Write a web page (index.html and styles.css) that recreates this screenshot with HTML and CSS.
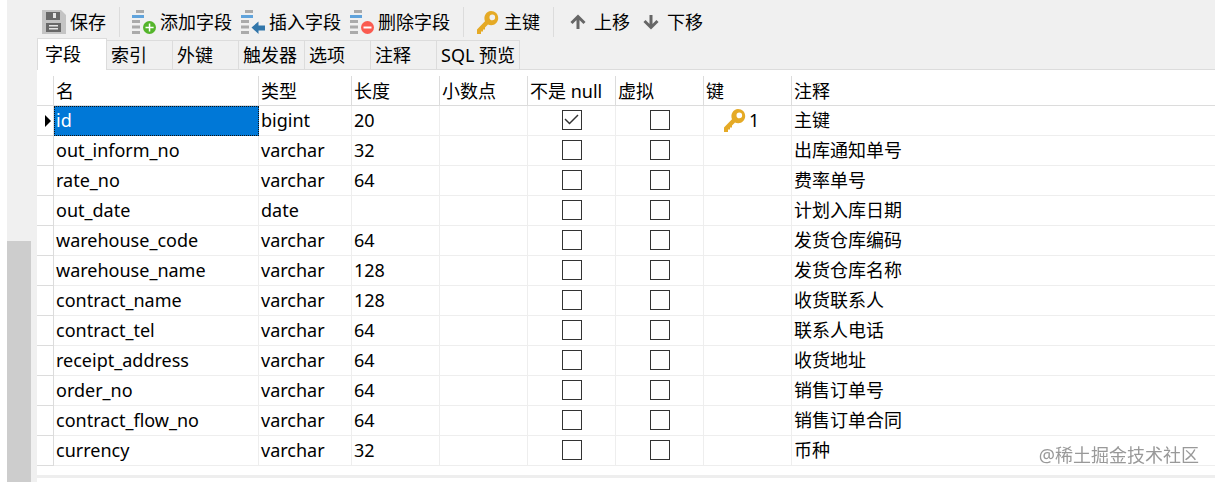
FILE: index.html
```
<!DOCTYPE html>
<html lang="zh-CN">
<head>
  <meta charset="UTF-8" />
  <meta name="viewport" content="width=device-width, initial-scale=1.0" />
  <title>字段</title>
  <link rel="stylesheet" href="styles.css">
</head>
<body>
  <!-- 公用图标 -->
  <svg class="symbols" aria-hidden="true">
    <symbol id="icon-key" viewBox="0 0 24 24">
      <path fill="#e5aa26" fill-rule="evenodd" d="M15 1c4.200 0 7.200 3 7.200 7s-3 7.200-7 7.200c-1.200 0-2.300-.3-3.200-.7l-3 3v2H7v2H5V24H1v-4.500l8-8.300A7.300 7.300 0 0 1 15 1zm1.300 3.600a2.800 2.800 0 1 0 0 5.600 2.800 2.800 0 0 0 0-5.600z" />
    </symbol>
    <symbol id="icon-rows" viewBox="0 0 24 24">
      <path fill="#aaa" d="M4 0h8v3H4zM0 10h8v3H0zM0 15.500h8v3H0zM0 21h8v3H0z" />
      <path fill="#5fa3dc" d="M0 5h12v3H0z" />
    </symbol>
  </svg>

  <div class="app">
    <!-- 左侧滚动条 -->
    <div class="scroll-track">
      <div class="scroll-thumb"></div>
    </div>

    <main class="designer">
      <div class="toolbar">
        <button type="button">
          <svg viewBox="0 0 24 24" aria-hidden="true">
            <path fill="#c4c4c4" d="M0 0h19l5 5v19H0z" />
            <path fill="#686868" d="M4 2h14v8H4zM4 13h15v9H4z" />
            <path fill="#e4e4e4" d="M11 3h3v5h-3zM7 15h9v1.500H7zM7 18h9v1.500H7z" />
          </svg>
          保存
        </button>
        <span class="separator"></span>
        <button type="button">
          <svg viewBox="0 0 24 24" aria-hidden="true">
            <use href="#icon-rows" />
            <circle cx="17.500" cy="17.500" r="6.500" fill="#54b52b" />
            <path fill="#fff" d="M16.800 13.500h1.500v3.300h3.300v1.500h-3.300v3.300h-1.500v-3.300h-3.300v-1.500h3.300z" />
          </svg>
          添加字段
        </button>
        <button type="button">
          <svg viewBox="0 0 24 24" aria-hidden="true">
            <use href="#icon-rows" />
            <path fill="#3276aa" d="M10.500 17.500l7-6v4H24v5h-6.500v3.500z" />
          </svg>
          插入字段
        </button>
        <button type="button">
          <svg viewBox="0 0 24 24" aria-hidden="true">
            <use href="#icon-rows" />
            <circle cx="17.500" cy="17.500" r="6.500" fill="#fa5b50" />
            <path fill="#fff" d="M13.500 16.500h8v2h-8z" />
          </svg>
          删除字段
        </button>
        <span class="separator"></span>
        <button type="button">
          <svg viewBox="0 0 24 24" aria-hidden="true"><use href="#icon-key" /></svg>
          主键
        </button>
        <span class="separator"></span>
        <button type="button">
          <svg viewBox="0 0 24 24" aria-hidden="true">
            <path fill="none" stroke="#666" stroke-width="3" d="M12 19V7M5.500 13L12 6.500l6.500 6.500" />
          </svg>
          上移
        </button>
        <button type="button">
          <svg viewBox="0 0 24 24" aria-hidden="true">
            <path fill="none" stroke="#666" stroke-width="3" d="M12 5v12M5.500 11l6.500 6.500 6.500-6.500" />
          </svg>
          下移
        </button>
      </div>

      <div class="tabs" role="tablist">
        <button type="button" role="tab" class="tab active" aria-selected="true">字段</button>
        <button type="button" role="tab" class="tab">索引</button>
        <button type="button" role="tab" class="tab">外键</button>
        <button type="button" role="tab" class="tab">触发器</button>
        <button type="button" role="tab" class="tab">选项</button>
        <button type="button" role="tab" class="tab">注释</button>
        <button type="button" role="tab" class="tab">SQL 预览</button>
      </div>

      <div class="grid-wrap">
        <table class="fields">
          <colgroup>
            <col class="col-marker">
            <col class="col-name">
            <col class="col-type">
            <col class="col-small" span="5">
            <col>
          </colgroup>
          <thead>
            <tr>
              <th></th>
              <th>名</th>
              <th>类型</th>
              <th>长度</th>
              <th>小数点</th>
              <th>不是 null</th>
              <th>虚拟</th>
              <th>键</th>
              <th>注释</th>
            </tr>
          </thead>
          <tbody>
            <tr>
              <td><span class="marker"></span></td>
              <td class="selected">id</td>
              <td>bigint</td>
              <td>20</td>
              <td></td>
              <td class="check"><input type="checkbox" aria-label="不是 null" checked></td>
              <td class="check"><input type="checkbox" aria-label="虚拟"></td>
              <td>
                <div class="key">
                  <svg viewBox="0 0 24 24" aria-hidden="true"><use href="#icon-key" /></svg>
                  1
                </div>
              </td>
              <td>主键</td>
            </tr>
            <tr>
              <td></td>
              <td>out_inform_no</td>
              <td>varchar</td>
              <td>32</td>
              <td></td>
              <td class="check"><input type="checkbox" aria-label="不是 null"></td>
              <td class="check"><input type="checkbox" aria-label="虚拟"></td>
              <td></td>
              <td>出库通知单号</td>
            </tr>
            <tr>
              <td></td>
              <td>rate_no</td>
              <td>varchar</td>
              <td>64</td>
              <td></td>
              <td class="check"><input type="checkbox" aria-label="不是 null"></td>
              <td class="check"><input type="checkbox" aria-label="虚拟"></td>
              <td></td>
              <td>费率单号</td>
            </tr>
            <tr>
              <td></td>
              <td>out_date</td>
              <td>date</td>
              <td></td>
              <td></td>
              <td class="check"><input type="checkbox" aria-label="不是 null"></td>
              <td class="check"><input type="checkbox" aria-label="虚拟"></td>
              <td></td>
              <td>计划入库日期</td>
            </tr>
            <tr>
              <td></td>
              <td>warehouse_code</td>
              <td>varchar</td>
              <td>64</td>
              <td></td>
              <td class="check"><input type="checkbox" aria-label="不是 null"></td>
              <td class="check"><input type="checkbox" aria-label="虚拟"></td>
              <td></td>
              <td>发货仓库编码</td>
            </tr>
            <tr>
              <td></td>
              <td>warehouse_name</td>
              <td>varchar</td>
              <td>128</td>
              <td></td>
              <td class="check"><input type="checkbox" aria-label="不是 null"></td>
              <td class="check"><input type="checkbox" aria-label="虚拟"></td>
              <td></td>
              <td>发货仓库名称</td>
            </tr>
            <tr>
              <td></td>
              <td>contract_name</td>
              <td>varchar</td>
              <td>128</td>
              <td></td>
              <td class="check"><input type="checkbox" aria-label="不是 null"></td>
              <td class="check"><input type="checkbox" aria-label="虚拟"></td>
              <td></td>
              <td>收货联系人</td>
            </tr>
            <tr>
              <td></td>
              <td>contract_tel</td>
              <td>varchar</td>
              <td>64</td>
              <td></td>
              <td class="check"><input type="checkbox" aria-label="不是 null"></td>
              <td class="check"><input type="checkbox" aria-label="虚拟"></td>
              <td></td>
              <td>联系人电话</td>
            </tr>
            <tr>
              <td></td>
              <td>receipt_address</td>
              <td>varchar</td>
              <td>64</td>
              <td></td>
              <td class="check"><input type="checkbox" aria-label="不是 null"></td>
              <td class="check"><input type="checkbox" aria-label="虚拟"></td>
              <td></td>
              <td>收货地址</td>
            </tr>
            <tr>
              <td></td>
              <td>order_no</td>
              <td>varchar</td>
              <td>64</td>
              <td></td>
              <td class="check"><input type="checkbox" aria-label="不是 null"></td>
              <td class="check"><input type="checkbox" aria-label="虚拟"></td>
              <td></td>
              <td>销售订单号</td>
            </tr>
            <tr>
              <td></td>
              <td>contract_flow_no</td>
              <td>varchar</td>
              <td>64</td>
              <td></td>
              <td class="check"><input type="checkbox" aria-label="不是 null"></td>
              <td class="check"><input type="checkbox" aria-label="虚拟"></td>
              <td></td>
              <td>销售订单合同</td>
            </tr>
            <tr>
              <td></td>
              <td>currency</td>
              <td>varchar</td>
              <td>32</td>
              <td></td>
              <td class="check"><input type="checkbox" aria-label="不是 null"></td>
              <td class="check"><input type="checkbox" aria-label="虚拟"></td>
              <td></td>
              <td>币种</td>
            </tr>
          </tbody>
        </table>
      </div>
    </main>
  </div>

  <div class="watermark">@稀土掘金技术社区</div>
</body>
</html>
```

FILE: styles.css
```
:root {
  --bg-bar: #f0f0f0;
  --thumb: #cdcdcd;
  --line: #dcdcdc;
  --line-light: #eeeeee;
  --accent: #0078d7;
}

* {
  box-sizing: border-box;
}

body {
  margin: 0;
  background: #fff;
  color: #000;
  font: 18px/24px "Noto Sans", "Noto Sans CJK SC", sans-serif;
}

button {
  font: inherit;
  color: inherit;
  white-space: nowrap;
}

.symbols {
  display: none;
}

.app {
  display: flex;
  min-height: 100vh;
  padding-left: 7px;
}

/* 左侧滚动条 */
.scroll-track {
  flex: none;
  display: flex;
  align-items: flex-end;
  width: 30px;
  background: var(--bg-bar);
}

.scroll-thumb {
  width: 24px;
  height: 50%;
  background: var(--thumb);
}

.designer {
  flex: 1;
  min-width: 0;
}

/* 工具栏 */
.toolbar {
  display: flex;
  align-items: center;
  gap: 9px;
  padding: 7px 5px 1px;
  background: var(--bg-bar);
}

.toolbar button {
  display: flex;
  align-items: center;
  gap: 4px;
  padding: 0;
  border: 0;
  background: none;
}

.toolbar svg,
.key svg {
  flex: none;
  width: 24px;
  height: 24px;
}

.separator {
  width: 1px;
  height: 30px;
  margin: 0 3px 0 4px;
  background: var(--line);
}

/* 标签页 */
.tabs {
  display: flex;
  align-items: flex-end;
  height: 32px;
  background: var(--bg-bar);
  box-shadow: inset 0 -1px var(--line);
}

.tab {
  min-width: 66px;
  height: 30px;
  padding: 0 4px;
  border: 1px solid var(--line);
  border-left: 0;
  background: none;
  text-align: left;
}

.tab.active {
  width: 70px;
  height: 32px;
  padding: 0 7px 2px;
  border-left: 1px solid var(--line);
  border-bottom: 0;
  background: #fff;
}

/* 字段表格 */
.grid-wrap {
  padding: 6px 0 9px;
  border-bottom: 3px solid var(--line-light);
}

.fields {
  width: 100%;
  table-layout: fixed;
  border-collapse: separate;
  border-spacing: 0;
}

.col-marker {
  width: 17px;
}

.col-name {
  width: 205px;
}

.col-type {
  width: 93px;
}

.col-small {
  width: 88px;
}

.fields th,
.fields td {
  height: 30px;
  padding: 0 2px;
  border-right: 1px solid var(--line-light);
  border-bottom: 1px solid var(--line-light);
  font-weight: normal;
  text-align: left;
  white-space: nowrap;
}

.fields td {
  padding-bottom: 2px;
}

.fields th,
.fields td:first-child {
  border-color: var(--line);
}

.fields th:last-child,
.fields td:last-child {
  border-right: 0;
}

.fields td:first-child {
  padding: 0 0 0 8px;
}

.marker {
  display: block;
  border: 6px solid transparent;
  border-left-color: #000;
  border-right: 0;
}

.fields .selected {
  padding: 0 1px 2px;
  border: 1px dotted #111;
  background: var(--accent);
  color: #fff;
}

.fields .check {
  text-align: center;
}

.check input {
  appearance: none;
  display: block;
  width: 20px;
  height: 20px;
  margin: 0 auto;
  border: 1px solid #333;
  background: #fff;
}

/* 勾选标记 */
.check input:checked::after {
  content: "";
  display: block;
  height: 18px;
  background: #333;
  clip-path: polygon(2px 9px, 3px 8px, 7px 12px, 15px 4px, 16px 5px, 7px 14px);
}

.key {
  display: flex;
  align-items: center;
  gap: 2px;
  padding-left: 17px;
}

.watermark {
  position: fixed;
  right: 16px;
  bottom: 15px;
  color: #999;
}
```
